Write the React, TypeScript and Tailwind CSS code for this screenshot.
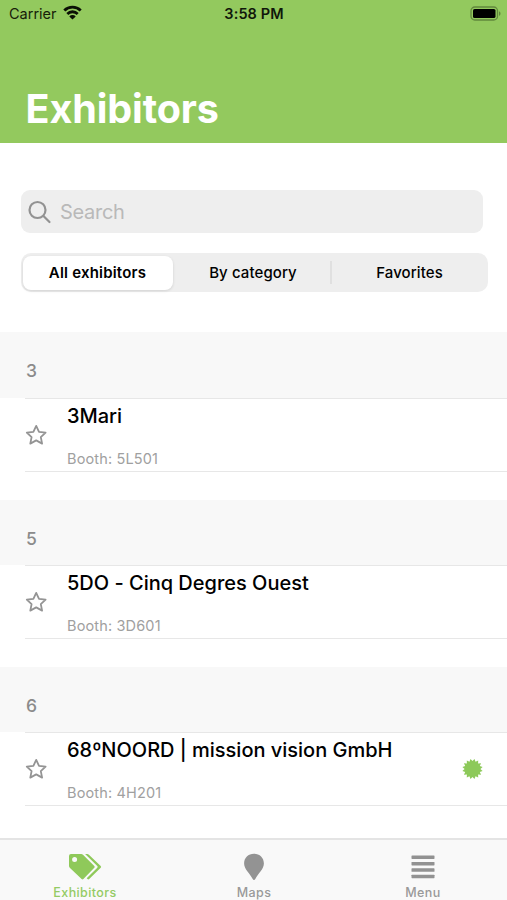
const groups = [
  { key: "3", name: "3Mari", booth: "Booth: 5L501", featured: false, head: "h-[66px]", end: "h-[28px]" },
  { key: "5", name: "5DO - Cinq Degres Ouest", booth: "Booth: 3D601", featured: false, head: "h-[65px]", end: "h-[28px]" },
  { key: "6", name: "68ºNOORD | mission vision GmbH", booth: "Booth: 4H201", featured: true, head: "h-[65px]", end: "h-[32px]" },
];

function Wifi() {
  return (
    <svg className="ml-[6px] mt-[5px] h-[15px] w-[19px]" viewBox="0 0 19 15" fill="none" stroke="#0b1005" strokeWidth="2.8">
      <path d="M1.3 5.4a11.7 11.7 0 0 1 16.4 0" />
      <path d="M4.3 8.9a7.4 7.4 0 0 1 10.4 0" />
      <path d="M9.5 14.6 6.3 11.4a4.5 4.5 0 0 1 6.4 0Z" fill="#0b1005" stroke="none" />
    </svg>
  );
}

function Battery() {
  return (
    <svg className="h-[15px] w-[31px]" viewBox="0 0 31 15">
      <rect x="1" y="1" width="26.5" height="13" rx="3.8" fill="none" stroke="#62883d" strokeWidth="1.3" />
      <rect x="3" y="3" width="22.5" height="9" rx="1.6" fill="#000" />
      <path d="M29 5.2c2 .8 2 3.8 0 4.6Z" fill="#62883d" />
    </svg>
  );
}

function Star() {
  return (
    <svg className="h-[22px] w-[22px] shrink-0" viewBox="0 0 22 22" fill="none" stroke="#949494" strokeWidth="1.8" strokeLinejoin="round">
      <path d="M11.2 1.9 14 7.8 20.6 8.6 15.8 13.1 17.1 19.6 11.2 16.4 5.3 19.6 6.6 13.1 1.8 8.6 8.4 7.8Z" />
    </svg>
  );
}

function Seal() {
  const points = Array.from({ length: 32 }, (_, i) => {
    const r = i % 2 ? 7.9 : 10.3;
    const a = ((i + 1) * Math.PI) / 16;
    return `${10.5 + r * Math.cos(a)},${10 + r * Math.sin(a)}`;
  }).join(" ");
  return (
    <svg className="h-[21px] w-[21px] overflow-visible" viewBox="0 0 21 21" fill="#8dc95a">
      <polygon points={points} />
    </svg>
  );
}

function Tags() {
  return (
    <svg className="h-[28px] w-[34px]" viewBox="0 0 34 28" fill="#8fc95a">
      <path fillRule="evenodd" d="M1 3a2 2 0 0 1 2-2h10.2q1 0 1.8.8L26.3 13q.9.9 0 1.8L15.4 26q-.9.9-1.8 0L2 14.9q-1-.9-1-2ZM6.6 4.1a2.5 2.5 0 1 0 0 5 2.5 2.5 0 0 0 0-5Z" />
      <path d="M17.1 1h2.2q.9 0 1.6.7L32.7 13q.9.9 0 1.8L21.2 26.1q-.8.8-1.7 0l-.8-.8L29.3 14.7q.8-.8 0-1.6Z" />
    </svg>
  );
}

function Pin() {
  return (
    <svg className="h-[28px] w-[22px]" viewBox="0 0 22 28" fill="#939393">
      <path d="M11 .8C5.2.8 1.1 5 1.1 10.5c0 5.8 5.7 9.7 8.6 15.5.6 1.3 2 1.3 2.6 0 2.9-5.8 8.6-9.7 8.6-15.5C20.9 5 16.8.8 11 .8Z" />
    </svg>
  );
}

function Bars() {
  return (
    <svg className="h-[28px] w-[24px]" viewBox="0 0 24 28" fill="#929292">
      <rect x=".5" y="2.4" width="23" height="3.5" rx=".6" />
      <rect x=".5" y="8.9" width="23" height="3.5" rx=".6" />
      <rect x=".5" y="15.3" width="23" height="3.5" rx=".6" />
      <rect x=".5" y="21.7" width="23" height="3.5" rx=".6" />
    </svg>
  );
}

export default function App() {
  return (
    <div className="flex h-[900px] w-[507px] flex-col overflow-hidden bg-white font-['Inter',sans-serif] text-black">
      <header className="h-[143px] shrink-0 bg-[#93c95e]">
        <div className="grid h-7 grid-cols-3 text-[14.5px] leading-7">
          <div className="flex pl-[9px] text-[#172009]"><span>Carrier</span><Wifi /></div>
          <div className="pl-[1px] text-center font-semibold tracking-[0.1px] text-[#10170a]">3:58 PM</div>
          <div className="flex justify-end pr-[6px] pt-[6px]"><Battery /></div>
        </div>
        <h1 className="pl-[25.5px] pt-[56px] text-[39.5px] font-bold leading-[50px] tracking-[-0.1px] text-white">Exhibitors</h1>
      </header>

      <div className="h-[189px] shrink-0 pl-[21px] pr-[19px] pt-[47px]">
        <div className="mr-[5px] flex h-[43px] items-center rounded-[9px] bg-[#eeeeee] pl-[7px]">
          <svg className="h-[24px] w-[24px]" viewBox="0 0 24 24" fill="none" stroke="#929292" strokeWidth="2.2" strokeLinecap="round">
            <circle cx="9.5" cy="10" r="8" /><path d="m15.5 16 6 6" />
          </svg>
          <span className="ml-[8px] text-[20px] tracking-[-0.3px] text-[#b9b9b9]">Search</span>
        </div>
        <div className="mt-[20px] flex h-[39px] items-center rounded-[10px] bg-[#eeeeee] p-[2px] text-[15px] font-medium tracking-[0.1px]">
          <div className="flex h-[34px] w-[150px] items-center justify-center rounded-[8px] bg-white pt-px pr-px font-semibold tracking-[0.2px] shadow-[0_1px_3px_rgba(0,0,0,0.12)]">All exhibitors</div>
          <div className="flex-1 pl-[3px] pt-px text-center">By category</div>
          <div className="h-[23px] w-[2px] bg-[#e0e0e0]" />
          <div className="w-[154px] pl-px pt-px text-center">Favorites</div>
        </div>
      </div>

      <main className="h-[506px] shrink-0">
        {groups.map((g) => (
          <section key={g.key}>
            <div className={`${g.head} bg-[#f8f8f8] pl-[26px] pt-[28px] text-[17.5px] font-medium leading-[22px] text-[#8b8b8b]`}>{g.key}</div>
            <div className="ml-[25px] flex h-[74px] items-center border-b-[1.5px] border-t-[1.5px] border-[#e7e7e7] pr-[24px]">
              <Star />
              <div className="ml-[20px] flex h-full flex-col whitespace-nowrap">
                <div className="mt-[4px] text-[20px] font-medium leading-[26px] tracking-[-0.01px]">{g.name}</div>
                <div className="mt-[20px] text-[14.5px] leading-[20px] tracking-[0.15px] text-[#a0a0a0]">{g.booth}</div>
              </div>
              {g.featured && <div className="ml-auto"><Seal /></div>}
            </div>
            <div className={g.end} />
          </section>
        ))}
      </main>

      <nav className="grid h-[62px] shrink-0 grid-cols-3 border-t-2 border-[#e4e4e4] bg-[#f9f9f9] text-[12.5px] font-medium tracking-[0.4px]">
        <div className="flex flex-col items-center pt-[13px] text-[#94cb64]"><Tags /><span className="mt-[3px] pl-px leading-[18px]">Exhibitors</span></div>
        <div className="flex flex-col items-center pt-[13px] text-[#999999]"><Pin /><span className="mt-[3px] pl-px leading-[18px]">Maps</span></div>
        <div className="flex flex-col items-center pt-[13px] text-[#999999]"><Bars /><span className="mt-[3px] pl-px leading-[18px]">Menu</span></div>
      </nav>
    </div>
  );
}
